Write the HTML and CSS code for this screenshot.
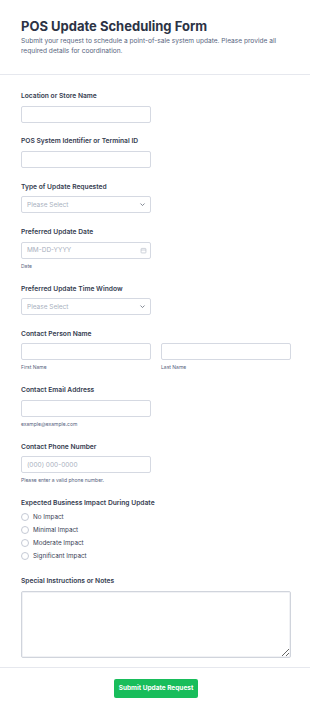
FILE: index.html
```html
<!DOCTYPE html>
<html lang="en">
<head>
  <meta charset="UTF-8" />
  <meta name="viewport" content="width=device-width, initial-scale=1.0"/>
  <title>POS Update Scheduling Form</title>
  <link rel="stylesheet" href="styles.css">
</head>
<body>
  <form class="form" id="posUpdateForm">
    <div class="form-header">
      <h1>POS Update Scheduling Form</h1>
      <p>Submit your request to schedule a point-of-sale system update. Please provide all required details for coordination.</p>
    </div>

    <div class="form-fields">
      <div class="field">
        <label class="field-label" for="location">Location or Store Name</label>
        <input type="text" id="location" name="location" class="half" />
      </div>

      <div class="field">
        <label class="field-label" for="terminal">POS System Identifier or Terminal ID</label>
        <input type="text" id="terminal" name="terminal" class="half" />
      </div>

      <div class="field">
        <label class="field-label" for="updateType">Type of Update Requested</label>
        <div class="select-wrap half">
          <select id="updateType" name="updateType">
            <option value="">Please Select</option>
            <option>Software Update</option>
            <option>Security Patch</option>
            <option>Hardware Firmware</option>
          </select>
          <svg class="chevron" viewBox="0 0 10 10"><path d="M2.5 4 5 6.5 7.5 4" fill="none" stroke="#6b7280" stroke-width="1.2" stroke-linecap="round" stroke-linejoin="round"/></svg>
        </div>
      </div>

      <div class="field">
        <label class="field-label" for="updateDate">Preferred Update Date</label>
        <div class="select-wrap half">
          <input type="text" id="updateDate" name="updateDate" placeholder="MM-DD-YYYY" />
          <svg class="calendar" viewBox="0 0 10 10"><rect x="1.5" y="2" width="7" height="6.5" rx="1" fill="none" stroke="#b4bac6" stroke-width="0.9"/><path d="M1.5 4.3h7" stroke="#b4bac6" stroke-width="0.9"/></svg>
        </div>
        <span class="sublabel">Date</span>
      </div>

      <div class="field">
        <label class="field-label" for="timeWindow">Preferred Update Time Window</label>
        <div class="select-wrap half">
          <select id="timeWindow" name="timeWindow">
            <option value="">Please Select</option>
            <option>Before Opening</option>
            <option>After Closing</option>
            <option>Overnight</option>
          </select>
          <svg class="chevron" viewBox="0 0 10 10"><path d="M2.5 4 5 6.5 7.5 4" fill="none" stroke="#6b7280" stroke-width="1.2" stroke-linecap="round" stroke-linejoin="round"/></svg>
        </div>
      </div>

      <div class="field">
        <label class="field-label" for="firstName">Contact Person Name</label>
        <div class="name-row">
          <div>
            <input type="text" id="firstName" name="firstName" />
            <span class="sublabel">First Name</span>
          </div>
          <div>
            <input type="text" id="lastName" name="lastName" />
            <span class="sublabel">Last Name</span>
          </div>
        </div>
      </div>

      <div class="field">
        <label class="field-label" for="email">Contact Email Address</label>
        <input type="email" id="email" name="email" class="half" />
        <span class="sublabel">example@example.com</span>
      </div>

      <div class="field">
        <label class="field-label" for="phone">Contact Phone Number</label>
        <input type="text" id="phone" name="phone" class="half" placeholder="(000) 000-0000" />
        <span class="sublabel">Please enter a valid phone number.</span>
      </div>

      <div class="field">
        <span class="field-label group-label">Expected Business Impact During Update</span>
        <label class="radio"><input type="radio" name="impact" value="none" /> No Impact</label>
        <label class="radio"><input type="radio" name="impact" value="minimal" /> Minimal Impact</label>
        <label class="radio"><input type="radio" name="impact" value="moderate" /> Moderate Impact</label>
        <label class="radio"><input type="radio" name="impact" value="significant" /> Significant Impact</label>
      </div>

      <div class="field">
        <label class="field-label" for="notes">Special Instructions or Notes</label>
        <textarea id="notes" name="notes"></textarea>
      </div>
    </div>

    <div class="form-footer">
      <button type="submit">Submit Update Request</button>
    </div>
  </form>
</body>
</html>
```

FILE: styles.css
```css
body {
  font-family: Inter, 'Noto Sans', sans-serif;
  margin: 0;
  padding: 0;
  background: #ffffff;
  color: #2c3345;
}

.form {
  width: 310px;
}

.form-header {
  padding: 18px 19px 18px 21px;
  border-bottom: 1px solid #e6e8ee;
}

.form-header h1 {
  margin: 0;
  font-size: 13px;
  line-height: 17px;
  font-weight: 700;
  color: #2c3345;
}

.form-header p {
  margin: 1px 0 0;
  font-size: 6.6px;
  line-height: 10px;
  color: #57647e;
}

.form-fields {
  padding: 16px 19px 9px 21px;
}

.field {
  margin-bottom: 13.9px;
}

.field:last-child {
  margin-bottom: 0;
}

.field-label {
  display: block;
  font-size: 6.7px;
  line-height: 10px;
  font-weight: 600;
  color: #343b4f;
  margin-bottom: 4.5px;
}

.group-label {
  margin-bottom: 2px;
}

.field input[type="text"],
.field input[type="email"],
.field select,
.field textarea {
  display: block;
  box-sizing: border-box;
  width: 100%;
  height: 17px;
  margin: 0;
  padding: 0 5px;
  font-family: inherit;
  font-size: 6.5px;
  color: #2c3345;
  background: #fff;
  border: 1px solid #d5d9e2;
  border-radius: 2px;
  outline: none;
}

.field .half,
.field input.half {
  width: 130px;
}

.field input::placeholder {
  color: #a9b0be;
}

.select-wrap {
  position: relative;
}

.select-wrap select {
  appearance: none;
  color: #a9b0be;
}

.select-wrap svg {
  position: absolute;
  top: 5px;
  right: 5px;
  width: 7px;
  height: 7px;
}

.select-wrap .calendar {
  right: 4px;
}

.sublabel {
  display: block;
  margin-top: 3px;
  font-size: 5px;
  line-height: 8px;
  color: #57647e;
}

.name-row {
  display: grid;
  grid-template-columns: 1fr 1fr;
  gap: 10px;
}

.radio {
  display: flex;
  align-items: center;
  height: 13px;
  font-size: 6.3px;
  color: #3a4256;
}

.radio input {
  appearance: none;
  box-sizing: border-box;
  width: 8px;
  height: 8px;
  margin: 0 4px 0 0;
  border: 1px solid #c5cad5;
  border-radius: 50%;
  background: #fff;
}

.field textarea {
  height: 67px;
  padding: 4px 5px;
  border-color: #d0d4dc;
  box-shadow: inset 0 0 0 1px #f1f2f5;
}

.form-footer {
  display: flex;
  justify-content: center;
  padding: 11px 0 20px;
  border-top: 1px solid #e6e8ee;
}

.form-footer button {
  height: 19px;
  padding: 0 5px;
  margin-left: 2px;
  font-family: inherit;
  font-size: 6.5px;
  font-weight: 700;
  color: #fff;
  background: #18bd5b;
  border: none;
  border-radius: 2px;
  cursor: pointer;
}
```
